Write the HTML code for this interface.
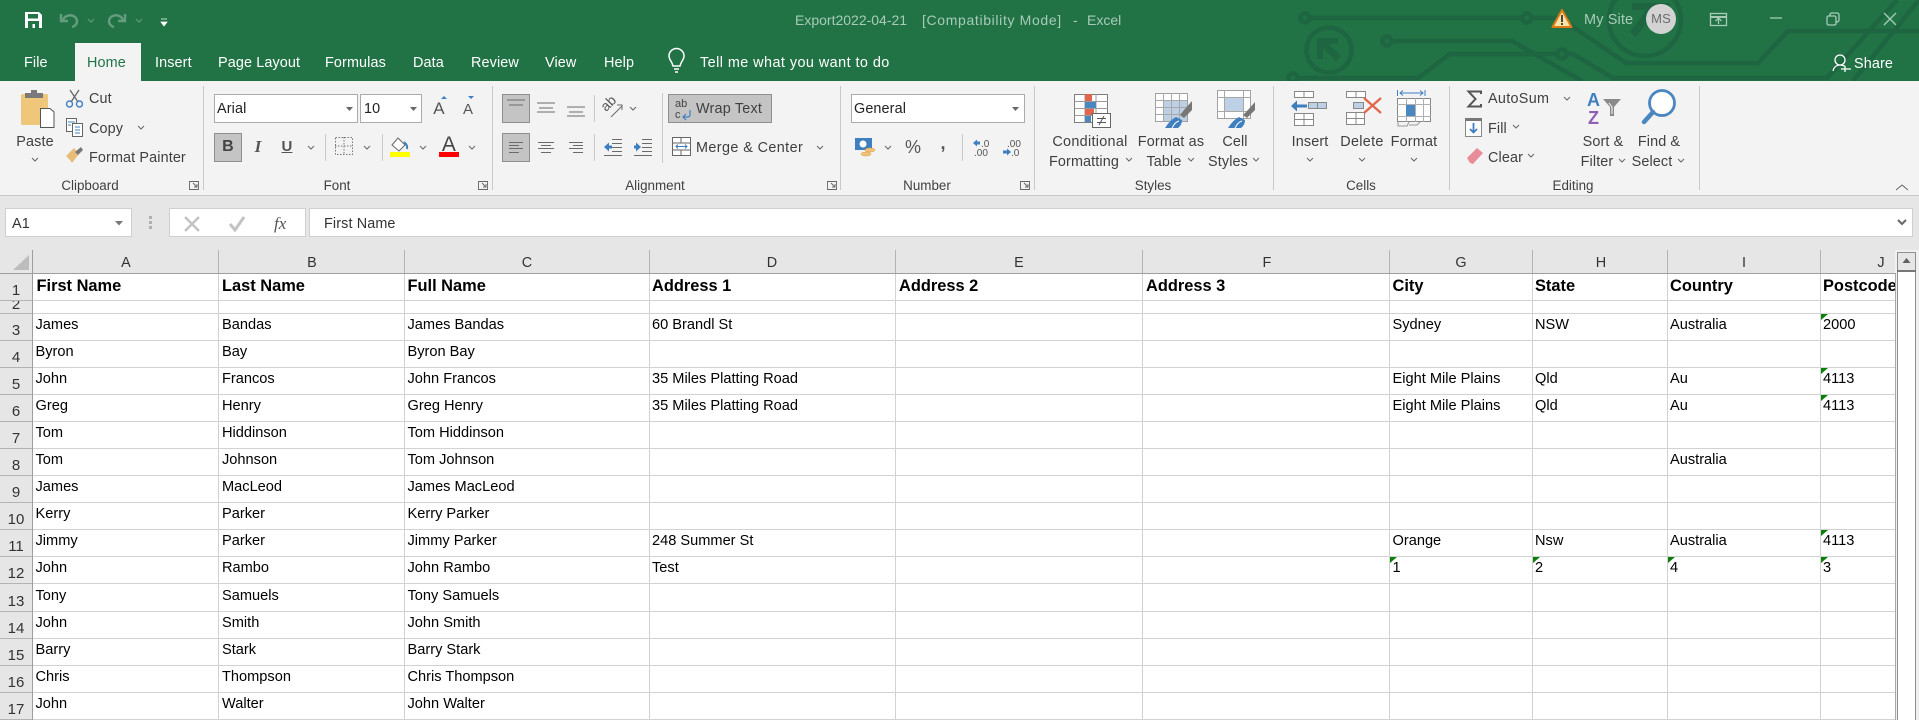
<!DOCTYPE html>
<html><head><meta charset="utf-8"><title>Export2022-04-21 - Excel</title>
<style>
html,body{margin:0;padding:0;background:#fff}
#p{position:relative;width:1919px;height:720px;overflow:hidden;background:#fff;font-family:"Liberation Sans",Arial,sans-serif}
#p>svg{position:absolute;left:0;top:0}
.t,.c{position:absolute;white-space:nowrap;font-size:14.4px;color:#404040;transform:translateY(calc(-50% + 1px));line-height:18px;letter-spacing:.12px}
.c{transform:translate(-50%,calc(-50% + 1px))}
.w{color:#fff}.d{color:#a8cbb8;transform:translateY(-50%)}
.c.l{font-size:13.4px;transform:translate(-50%,-50%);letter-spacing:0}
.r{position:absolute;left:0;width:1895px;height:27px;overflow:hidden;font-size:14.6px;line-height:22px;color:#000}
.r i{position:absolute;font-style:normal;white-space:nowrap;top:1px}
.a{left:35.5px}.b{left:222px}.e{left:407.5px}.f{left:652px}.g{left:1392.5px}.h{left:1535px}.k{left:1670px}.j{left:1823px}
.h1{font-weight:bold;font-size:16.4px;line-height:24px}
.n{position:absolute;left:0;width:32px;text-align:center;font-size:15px;line-height:18px;color:#333;overflow:hidden}
</style></head><body><div id="p">
<svg width="1919" height="720" viewBox="0 0 1919 720" xmlns="http://www.w3.org/2000/svg">
<rect width="1919" height="81" fill="#217346"/>
<g fill="none" stroke="#1e6541" stroke-width="4.5">
<path d="M1309,18H1523M1531,18H1560L1626,63H1758L1788,31H1919"/>
<circle cx="1305" cy="18" r="4.5"/><circle cx="1527" cy="18" r="4.5"/>
<path d="M1392,41H1512L1582,81"/><circle cx="1387" cy="41" r="4.5"/>
<path d="M1557,54H1450L1418,78H1298"/><circle cx="1562" cy="54" r="4.5"/><circle cx="1293" cy="78" r="4.5"/>
<path d="M1567,54H1573L1613,78H1827L1897,0M1853,81L1919,0"/>
<circle cx="1329" cy="50" r="22.5"/><circle cx="1645" cy="20" r="36"/>
</g>
<path d="M1317,38H1338V44H1329L1341,56L1336,61L1323,48V59H1317Z" fill="#1e6541"/>
<path d="M1632,3H1670V10H1660V25H1652V16L1636,37L1630,32L1646,10H1632Z" fill="#1e6541"/>
<rect y="43" x="75" width="66" height="38" fill="#f3f3f3"/>
<rect y="81" width="1919" height="114" fill="#f3f3f3"/>
<rect y="195" width="1919" height="1" fill="#c9c9c9"/>
<rect y="196" width="1919" height="77" fill="#e6e6e6"/>

<!-- QAT -->
<path d="M25,12H39L42,15V28H25Z" fill="#fff"/><rect x="28" y="14" width="10" height="4.5" fill="#217346"/><rect x="28" y="21" width="11" height="7" fill="#217346"/><rect x="32.5" y="24" width="2.5" height="4" fill="#fff"/>
<g fill="none" stroke="#649c7e" stroke-width="2.4"><path d="M63,21A7,6,0,1,1,72,27M61,14V21H68"/><path d="M123,21A7,6,0,1,0,114,27M125,14V21H118"/></g>
<g fill="none" stroke="#649c7e" stroke-width="1"><path d="M88,19l3,3,3-3M136,19l3,3,3-3"/></g>
<path d="M161,19H167M161,22H167L164,26Z" fill="#fff" stroke="#fff" stroke-width=".8"/>
<!-- bulb -->
<g fill="none" stroke="#fff" stroke-width="1.5"><path d="M673,66C672,61,669,60,669,56A7.5,7.5,0,0,1,684,56C684,60,681,61,680,66Z"/><path d="M674,69H679M675,72H678"/></g>
<!-- warning -->
<path d="M1562,10L1571.5,27H1552.5Z" fill="#fce3a6" stroke="#e07a14" stroke-width="2" stroke-linejoin="round"/><rect x="1561" y="15" width="2" height="7" fill="#444"/><rect x="1561" y="23" width="2" height="2" fill="#444"/>
<circle cx="1661" cy="19" r="15" fill="#d3d3d3"/>
<!-- window controls -->
<g fill="none" stroke="#a8cbb8" stroke-width="1.3">
<rect x="1710.5" y="13.5" width="16" height="12"/><path d="M1711,17H1726" stroke-width="2"/><path d="M1718.5,24V18M1715.5,21l3-3,3,3"/>
<path d="M1770,18H1782"/>
<rect x="1827" y="16" width="9" height="9" rx="1.5"/><path d="M1830,16V14.500Q1830,13,1832,13H1837Q1839,13,1839,15V20Q1839,22,1836,22"/>
<path d="M1884,13L1896,25M1896,13L1884,25"/>
</g>
<g fill="none" stroke="#fff" stroke-width="1.3"><circle cx="1840" cy="60" r="5"/><path d="M1833,71C1834,66,1838,65,1840,65C1842,65,1844,66,1845,66M1845,66V72M1841,69H1851"/></g>

<!-- separators -->
<g fill="#c9c9c9"><rect x="203" y="86" width="1" height="104"/><rect x="492" y="86" width="1" height="104"/><rect x="840" y="86" width="1" height="104"/><rect x="1034" y="86" width="1" height="104"/><rect x="1273" y="86" width="1" height="104"/><rect x="1449" y="86" width="1" height="104"/><rect x="1699" y="86" width="1" height="104"/>
<rect x="325" y="134" width="1" height="27"/><rect x="382" y="134" width="1" height="27"/><rect x="594" y="95" width="1" height="27"/><rect x="594" y="134" width="1" height="27"/><rect x="662" y="93" width="1" height="70"/><rect x="962" y="134" width="1" height="27"/></g>

<!-- clipboard -->
<rect x="21" y="94" width="27" height="31" rx="1.5" fill="#eec77b"/>
<path d="M25,98V93H31V90H37V93H43V98Z" fill="#7a7a7a"/>
<path d="M40.500,108.500H50L54,112V127.500H40.500Z" fill="#fff" stroke="#555"/>
<g fill="none" stroke="#666" stroke-width="1.3"><path d="M70,90L78,102M79,90L71,102"/></g>
<g fill="none" stroke="#3f7fc0" stroke-width="1.4"><circle cx="69.500" cy="104" r="3"/><circle cx="79.500" cy="104" r="3"/></g>
<g fill="#fff" stroke="#666"><rect x="66.500" y="118.500" width="10" height="13"/><rect x="72.500" y="123.500" width="10" height="13"/></g>
<path d="M68,122H75M68,125H71M75,127H80M75,130H80M75,133H80" stroke="#3f7fc0" fill="none"/>
<path d="M66,156L74,148L79,154L72,163C70,160,68,158,66,156Z" fill="#e8bd7a"/><path d="M75,152L81,147L83,150L78,155Z" fill="#777"/>

<!-- font boxes -->
<g fill="#fff" stroke="#ababab"><rect x="214.500" y="94.500" width="143" height="28"/><rect x="360.500" y="94.500" width="61" height="28"/><rect x="851.500" y="94.500" width="173" height="28"/></g>
<g fill="#666"><path d="M346,107h7l-3.500,4zM410,107h7l-3.500,4zM1012,107h7l-3.500,4z"/></g>
<g fill="#c4c4c4" stroke="#8f8f8f"><rect x="214.500" y="133.500" width="27" height="28"/><rect x="502.500" y="94.500" width="27" height="28"/><rect x="502.500" y="133.500" width="27" height="28"/><rect x="668.500" y="94.500" width="103" height="28"/></g>
<!-- A up/down -->
<path d="M444,96l3,3h-6zM471,99l3-3h-6z" fill="#3f7fc0"/>
<!-- borders -->
<rect x="335.500" y="137.500" width="17" height="17" fill="none" stroke="#777" stroke-dasharray="1.500 1.500"/><path d="M344,137V155M335,146H353" stroke="#777" stroke-dasharray="1.500 1.500"/>
<!-- fill color -->
<path d="M392,145L398,138L405,145L399,151Z" fill="#fff" stroke="#666"/><path d="M404,142Q408,145,407,149" stroke="#3f7fc0" stroke-width="2" fill="none"/>
<rect x="390" y="152" width="20" height="5" fill="#ff0"/>
<rect x="439" y="152" width="20" height="5" fill="#f00"/>
<!-- align -->
<g stroke="#6b6b6b" stroke-width="1" fill="none">
<path d="M507,100H525M509,105H523"/>
<path d="M537,103H555M539,108H553M537,112H555"/>
<path d="M567,107H585M569,112H583M567,116H585"/>
<path d="M509,142.500H523M509,145.500H519M509,148.500H523M509,152.500H519"/>
<path d="M538,142.500H554M541,145.500H551M538,148.500H554M541,152.500H551"/>
<path d="M569,142.500H583M573,145.500H583M569,148.500H583M573,152.500H583"/>
<path d="M612,139.500H622M612,143.500H622M612,147.500H622M612,151.500H622M604,155.500H622"/>
<path d="M642,139.500H652M642,143.500H652M642,147.500H652M642,151.500H652M634,155.500H652"/>
<path d="M611,117L622,106M617,105H622V110"/>
</g>
<path d="M604,147l5-4.500v3h3v3h-3v3zM641,147l-5-4.500v3h-2v3h2v3z" fill="#3f7fc0"/>
<text x="602" y="108" font-size="14" fill="#555" transform="rotate(-45 609 105)" font-family="Liberation Sans">ab</text>
<!-- wrap -->
<text x="675" y="107" font-size="11" fill="#444" font-family="Liberation Sans">ab</text><text x="675" y="118" font-size="11" fill="#444" font-family="Liberation Sans">c</text>
<path d="M690,110V115Q690,117,687,117H683M686,114l-3,3,3,3" fill="none" stroke="#3f7fc0" stroke-width="1.200"/>
<!-- merge -->
<rect x="672.500" y="137.500" width="18" height="18" fill="#fff" stroke="#666"/><path d="M672,143H691M672,150H691M681,137V143M681,150V156" stroke="#666"/><path d="M676,146.500H687M678,144.500l-2,2,2,2M685,144.500l2,2-2,2" fill="none" stroke="#3f7fc0"/>
<!-- currency -->
<rect x="855" y="138" width="17" height="12" fill="#3f7fc0"/><circle cx="863" cy="144" r="3.500" fill="#fff"/><ellipse cx="870" cy="150" rx="5" ry="2" fill="#f2c27a" stroke="#d99a3f" stroke-width=".5"/><ellipse cx="866" cy="154" rx="5" ry="2" fill="#f2c27a" stroke="#d99a3f" stroke-width=".5"/>
<!-- decimals -->
<g font-family="Liberation Sans" font-size="10" fill="#555"><text x="981" y="147">.0</text><text x="974" y="156">.00</text><text x="1007" y="147">.00</text><text x="1011" y="156">.0</text></g>
<path d="M973,143l4-3.500v2h3v3h-3v2zM1011,152l-4-3.500v2h-4v3h4v2z" fill="#3f7fc0"/>
<!-- conditional -->
<g fill="#fff" stroke="#7d7d7d"><rect x="1074.500" y="94.500" width="33" height="28"/></g>
<path d="M1074,101.500H1108M1074,108.500H1108M1074,115.500H1108M1085,94V122M1096,94V122" stroke="#9a9a9a"/>
<rect x="1085" y="94" width="7" height="7" fill="#e0654a"/><rect x="1085" y="102" width="11" height="6" fill="#4a86c0"/><rect x="1085" y="109" width="9" height="6" fill="#e0654a"/><rect x="1085" y="116" width="6" height="6" fill="#4a86c0"/>
<rect x="1092.500" y="113.500" width="18" height="14" fill="#fff" stroke="#666"/><path d="M1097,118.500H1106M1097,122.500H1106M1104,116L1099,125" stroke="#555" fill="none"/>
<!-- format as table -->
<rect x="1155.500" y="93.500" width="32" height="28" fill="#fff" stroke="#a0a0a0"/><rect x="1163" y="101" width="24" height="20" fill="#bdd0e6"/><path d="M1155,100.500H1187M1155,107.500H1187M1155,114.500H1187M1163.500,93V121M1171.500,93V121M1179.500,93V121" stroke="#a8a8a8"/>
<path d="M1192,101L1184,110L1180,115L1184,118L1192,110Z" fill="#777"/><path d="M1165,128Q1170,120,1176,117L1182,120Q1182,125,1178,128Z" fill="#3f7fc0"/><path d="M1172,128Q1175,122,1179,121" stroke="#fff" fill="none"/>
<!-- cell styles -->
<rect x="1217.500" y="90.500" width="33" height="28" fill="#fff" stroke="#a0a0a0"/><rect x="1224" y="98" width="19" height="13" fill="#bdd0e6"/><path d="M1217,97.500H1250M1217,111.500H1250M1224.500,90V118M1243.500,90V118" stroke="#a8a8a8"/>
<path d="M1255,102L1247,111L1243,115L1247,118L1255,110Z" fill="#777"/><path d="M1228,128Q1233,120,1239,117L1245,120Q1245,125,1241,128Z" fill="#3f7fc0"/><path d="M1235,128Q1238,122,1242,121" stroke="#fff" fill="none"/>
<!-- insert -->
<g fill="#fff" stroke="#888"><rect x="1294.500" y="91.500" width="19" height="6"/><rect x="1294.500" y="113.500" width="19" height="12"/><rect x="1346.500" y="91.500" width="19" height="6"/><rect x="1346.500" y="112.500" width="18" height="12"/><rect x="1397.500" y="98.500" width="33" height="23"/></g>
<path d="M1304,91V97M1304,113V126M1294,119.500H1313M1356,91V97M1356,112V124M1346,118.500H1364" stroke="#888"/>
<g fill="#bdd0e6" stroke="#888"><rect x="1308.500" y="102.500" width="18" height="6"/><rect x="1353.500" y="102.500" width="10" height="6"/></g>
<path d="M1317.500,102V109" stroke="#888"/>
<path d="M1291,106l6-5.500v4h10v3h-10v4z" fill="#3f7fc0"/>
<path d="M1364,98L1381,113M1381,98L1364,113" stroke="#e0654a" stroke-width="2.200"/>
<!-- format -->
<path d="M1397.500,90V96M1425,90V96M1400,93H1423M1403,90.500l-3,2.500,3,2.500M1420,90.500l3,2.500-3,2.500" fill="none" stroke="#3f7fc0"/>
<path d="M1397,104.500H1431M1397,116.500H1431M1406.500,98V122M1415.500,98V122M1423.500,98V122" stroke="#b0b0b0"/>
<rect x="1406" y="105" width="9" height="11" fill="#4a86c0"/>
<path d="M1398,122V126H1407L1409,122M1409,125H1417L1420,122" fill="none" stroke="#999"/>
<!-- editing -->
<path d="M1481,94V91.500H1468.500L1475.500,99L1468.500,106.500H1481V104" fill="none" stroke="#555" stroke-width="2"/>
<rect x="1465.500" y="118.500" width="16" height="18" fill="#fff" stroke="#888"/><rect x="1465" y="118" width="17" height="3" fill="#777"/><path d="M1473.500,123V132M1470,129l3.500,3.500,3.500-3.500" fill="none" stroke="#3f7fc0" stroke-width="1.800"/>
<path d="M1467,158L1477,148L1483,153L1473,164L1470,163Z" fill="#e98c9a"/>
<text x="1587" y="106" font-size="18" font-weight="bold" fill="#3f7fc0" font-family="Liberation Sans">A</text>
<text x="1588" y="124" font-size="18" font-weight="bold" fill="#8e5fb5" font-family="Liberation Sans">Z</text>
<path d="M1603,99H1621L1614,107V116H1610V107Z" fill="#8a8a8a"/><path d="M1609,103L1612,107V114" stroke="#fff" fill="none"/>
<circle cx="1662" cy="103" r="12.500" fill="#fff" stroke="#4a86c0" stroke-width="2.800"/><path d="M1653,112L1644,122" stroke="#4a86c0" stroke-width="4.500" stroke-linecap="round"/>
<!-- chevrons -->
<g fill="none" stroke="#666" stroke-width="1">
<path d="M32,158l3,3,3-3M138,126l3,3,3-3M308,146l3,3,3-3M364,146l3,3,3-3M420,146l3,3,3-3M469,146l3,3,3-3M630,107l3,3,3-3M817,146l3,3,3-3M885,146l3,3,3-3M1126,158l3,3,3-3M1188,158l3,3,3-3M1253,158l3,3,3-3M1307,158l3,3,3-3M1359,158l3,3,3-3M1411,158l3,3,3-3M1564,97l3,3,3-3M1513,125l3,3,3-3M1528,154l3,3,3-3M1619,159l3,3,3-3M1678,159l3,3,3-3"/>
<path d="M1896,190l6-5,6,5"/>
<path d="M189.500,181.500h9v8h-9zM193,183l4,4M197,184v3h-3" stroke-width=".9"/>
<path d="M478.500,181.500h9v8h-9zM482,183l4,4M486,184v3h-3" stroke-width=".9"/>
<path d="M827.500,181.500h9v8h-9zM831,183l4,4M835,184v3h-3" stroke-width=".9"/>
<path d="M1020.500,181.500h9v8h-9zM1024,183l4,4M1028,184v3h-3" stroke-width=".9"/>
</g>

<!-- formula bar -->
<g fill="#fff" stroke="#cfcfcf"><rect x="5.500" y="208.500" width="126" height="28"/><rect x="169.500" y="208.500" width="136" height="28"/><rect x="309.500" y="208.500" width="1603" height="28"/></g>
<path d="M115,221h8l-4,4.500z" fill="#777"/>
<g fill="#b0b0b0"><rect x="149" y="216" width="3" height="3"/><rect x="149" y="221" width="3" height="3"/><rect x="149" y="226" width="3" height="3"/></g>
<path d="M185,217L199,231M199,217L185,231" stroke="#c3c3c3" stroke-width="2.500"/><path d="M230,224L235,230L244,217" stroke="#c3c3c3" stroke-width="3" fill="none"/>
<path d="M1898,220l4,4,4-4" fill="none" stroke="#666" stroke-width="2"/>
<text x="274" y="229" font-family="Liberation Serif" font-style="italic" font-size="17" fill="#555">fx</text>

<!-- header/grid -->
<rect y="250" width="1897" height="23" fill="#e6e6e6"/>
<rect y="273" width="32" height="447" fill="#e6e6e6"/>
<path d="M13,270H29V255Z" fill="#bdbdbd"/>
<rect x="32" y="250" width="1" height="470" fill="#9e9e9e"/>
<rect y="273" width="1895" height="1" fill="#9e9e9e"/>
<g fill="#b4b4b4"><rect x="218" y="250" width="1" height="23"/><rect x="404" y="250" width="1" height="23"/><rect x="649" y="250" width="1" height="23"/><rect x="895" y="250" width="1" height="23"/><rect x="1142" y="250" width="1" height="23"/><rect x="1389" y="250" width="1" height="23"/><rect x="1532" y="250" width="1" height="23"/><rect x="1667" y="250" width="1" height="23"/><rect x="1820" y="250" width="1" height="23"/></g>
<g fill="#d2d2d2"><rect x="218" y="274" width="1" height="446"/><rect x="404" y="274" width="1" height="446"/><rect x="649" y="274" width="1" height="446"/><rect x="895" y="274" width="1" height="446"/><rect x="1142" y="274" width="1" height="446"/><rect x="1389" y="274" width="1" height="446"/><rect x="1532" y="274" width="1" height="446"/><rect x="1667" y="274" width="1" height="446"/><rect x="1820" y="274" width="1" height="446"/>
<rect x="33" y="300" width="1862" height="1"/><rect x="33" y="313" width="1862" height="1"/><rect x="33" y="340" width="1862" height="1"/><rect x="33" y="367" width="1862" height="1"/><rect x="33" y="394" width="1862" height="1"/><rect x="33" y="421" width="1862" height="1"/><rect x="33" y="448" width="1862" height="1"/><rect x="33" y="475" width="1862" height="1"/><rect x="33" y="502" width="1862" height="1"/><rect x="33" y="529" width="1862" height="1"/><rect x="33" y="556" width="1862" height="1"/><rect x="33" y="583" width="1862" height="1"/><rect x="33" y="611" width="1862" height="1"/><rect x="33" y="638" width="1862" height="1"/><rect x="33" y="665" width="1862" height="1"/><rect x="33" y="692" width="1862" height="1"/><rect x="33" y="719" width="1862" height="1"/></g>
<g fill="#b4b4b4"><rect y="300" width="32" height="1"/><rect y="313" width="32" height="1"/><rect y="340" width="32" height="1"/><rect y="367" width="32" height="1"/><rect y="394" width="32" height="1"/><rect y="421" width="32" height="1"/><rect y="448" width="32" height="1"/><rect y="475" width="32" height="1"/><rect y="502" width="32" height="1"/><rect y="529" width="32" height="1"/><rect y="556" width="32" height="1"/><rect y="583" width="32" height="1"/><rect y="611" width="32" height="1"/><rect y="638" width="32" height="1"/><rect y="665" width="32" height="1"/><rect y="692" width="32" height="1"/><rect y="719" width="32" height="1"/></g>
<!-- scrollbar -->
<rect x="1895" y="250" width="24" height="470" fill="#f0f0f0"/>
<rect x="1895" y="273" width="1" height="447" fill="#a8a8a8"/>
<rect x="1897.500" y="252.500" width="18" height="468" fill="#fff" stroke="#8f8f8f"/>
<rect x="1898" y="253" width="17" height="17" fill="#e6e6e6"/>
<rect x="1897" y="270" width="19" height="2" fill="#777"/>
<path d="M1902.500,263h8l-4-5z" fill="#606060"/>
</svg>

<!-- titlebar text -->
<div class="t d" style="left:795px;top:20px;font-size:14px;letter-spacing:0">Export2022-04-21</div>
<div class="t d" style="left:922px;top:20px;font-size:14px;letter-spacing:.65px">[Compatibility Mode]</div>
<div class="t d" style="left:1073px;top:20px;font-size:14px;letter-spacing:0">-</div>
<div class="t d" style="left:1087px;top:20px;font-size:14px;letter-spacing:0">Excel</div>
<div class="t d" style="left:1584px;top:20px;font-size:14.500px">My Site</div>
<div class="c" style="left:1661px;top:18px;font-size:13px;color:#6b6b6b">MS</div>
<div class="t w" style="left:24px;top:62px">File</div>
<div class="t" style="left:87px;top:62px;color:#217346">Home</div>
<div class="t w" style="left:155px;top:62px">Insert</div>
<div class="t w" style="left:218px;top:62px">Page Layout</div>
<div class="t w" style="left:325px;top:62px">Formulas</div>
<div class="t w" style="left:413px;top:62px">Data</div>
<div class="t w" style="left:471px;top:62px">Review</div>
<div class="t w" style="left:545px;top:62px">View</div>
<div class="t w" style="left:604px;top:62px">Help</div>
<div class="t w" style="left:700px;top:62px;letter-spacing:.45px">Tell me what you want to do</div>
<div class="t w" style="left:1854px;top:63px">Share</div>

<!-- clipboard text -->
<div class="c" style="left:35px;top:141px">Paste</div>
<div class="t" style="left:89px;top:98px">Cut</div>
<div class="t" style="left:89px;top:128px">Copy</div>
<div class="t" style="left:89px;top:157px">Format Painter</div>
<div class="c l" style="left:90px;top:186px">Clipboard</div>
<div class="t" style="left:217px;top:108px;color:#222">Arial</div>
<div class="t" style="left:364px;top:108px;color:#222">10</div>
<div class="c" style="left:439px;top:108px;font-size:17px;color:#555">A</div>
<div class="c" style="left:468px;top:109px;font-size:15px;color:#555">A</div>
<div class="c" style="left:228px;top:146px;font-weight:bold;font-size:16px;color:#444">B</div>
<div class="c" style="left:258px;top:146px;font-family:'Liberation Serif',serif;font-style:italic;font-weight:bold;font-size:17px;color:#555">I</div>
<div class="c" style="left:287px;top:146px;font-weight:bold;font-size:15px;text-decoration:underline;color:#555">U</div>
<div class="c" style="left:449px;top:144px;font-size:21px;color:#444">A</div>
<div class="c l" style="left:337px;top:186px">Font</div>
<div class="t" style="left:696px;top:108px;letter-spacing:.2px">Wrap Text</div>
<div class="t" style="left:696px;top:147px;letter-spacing:.4px">Merge &amp; Center</div>
<div class="c l" style="left:655px;top:186px">Alignment</div>
<div class="t" style="left:854px;top:108px;color:#222">General</div>
<div class="c" style="left:913px;top:146px;font-size:18px;color:#555">%</div>
<div class="c" style="left:943px;top:142px;font-size:18px;font-weight:bold;color:#555">,</div>
<div class="c l" style="left:927px;top:186px">Number</div>
<div class="c" style="left:1090px;top:141px;letter-spacing:.3px">Conditional</div>
<div class="c" style="left:1084px;top:161px;letter-spacing:.12px">Formatting</div>
<div class="c" style="left:1171px;top:141px;letter-spacing:.2px">Format as</div>
<div class="c" style="left:1164px;top:161px">Table</div>
<div class="c" style="left:1235px;top:141px">Cell</div>
<div class="c" style="left:1228px;top:161px">Styles</div>
<div class="c l" style="left:1153px;top:186px">Styles</div>
<div class="c" style="left:1310px;top:141px">Insert</div>
<div class="c" style="left:1362px;top:141px;letter-spacing:.3px">Delete</div>
<div class="c" style="left:1414px;top:141px;letter-spacing:.2px">Format</div>
<div class="c l" style="left:1361px;top:186px">Cells</div>
<div class="t" style="left:1488px;top:98px;letter-spacing:.3px">AutoSum</div>
<div class="t" style="left:1488px;top:128px">Fill</div>
<div class="t" style="left:1488px;top:157px">Clear</div>
<div class="c" style="left:1603px;top:141px">Sort &amp;</div>
<div class="c" style="left:1597px;top:161px">Filter</div>
<div class="c" style="left:1659px;top:141px">Find &amp;</div>
<div class="c" style="left:1652px;top:161px">Select</div>
<div class="c l" style="left:1573px;top:186px">Editing</div>
<div class="t" style="left:12px;top:223px;color:#333">A1</div>
<div class="t" style="left:324px;top:223px;color:#333">First Name</div>

<!-- col headers -->
<div class="c" style="left:126px;top:262px;color:#333">A</div>
<div class="c" style="left:312px;top:262px;color:#333">B</div>
<div class="c" style="left:527px;top:262px;color:#333">C</div>
<div class="c" style="left:772px;top:262px;color:#333">D</div>
<div class="c" style="left:1019px;top:262px;color:#333">E</div>
<div class="c" style="left:1267px;top:262px;color:#333">F</div>
<div class="c" style="left:1461px;top:262px;color:#333">G</div>
<div class="c" style="left:1601px;top:262px;color:#333">H</div>
<div class="c" style="left:1744px;top:262px;color:#333">I</div>
<div class="c" style="left:1881px;top:262px;color:#333">J</div>

<!-- row numbers -->
<div class="n" style="top:282px;height:18px">1</div>
<div class="n" style="top:301px;height:12px;line-height:8px;padding:0">2</div>
<div class="n" style="top:322px">3</div><div class="n" style="top:349px">4</div><div class="n" style="top:376px">5</div><div class="n" style="top:403px">6</div><div class="n" style="top:430px">7</div><div class="n" style="top:457px">8</div><div class="n" style="top:484px">9</div><div class="n" style="top:511px">10</div><div class="n" style="top:538px">11</div><div class="n" style="top:565px">12</div><div class="n" style="top:593px">13</div><div class="n" style="top:620px">14</div><div class="n" style="top:647px">15</div><div class="n" style="top:674px">16</div><div class="n" style="top:701px">17</div>

<!-- cells -->
<div class="r h1" style="top:273px"><i class="a" style="left:36.5px">First Name</i><i class="b">Last Name</i><i class="e">Full Name</i><i class="f">Address 1</i><i style="left:899px">Address 2</i><i style="left:1146px">Address 3</i><i class="g">City</i><i class="h">State</i><i class="k">Country</i><i class="j">Postcode</i></div>
<div class="r" style="top:313px"><i class="a">James</i><i class="b">Bandas</i><i class="e">James Bandas</i><i class="f">60 Brandl St</i><i class="g">Sydney</i><i class="h">NSW</i><i class="k">Australia</i><i class="j">2000</i></div>
<div class="r" style="top:340px"><i class="a">Byron</i><i class="b">Bay</i><i class="e">Byron Bay</i></div>
<div class="r" style="top:367px"><i class="a">John</i><i class="b">Francos</i><i class="e">John Francos</i><i class="f">35 Miles Platting Road</i><i class="g">Eight Mile Plains</i><i class="h">Qld</i><i class="k">Au</i><i class="j">4113</i></div>
<div class="r" style="top:394px"><i class="a">Greg</i><i class="b">Henry</i><i class="e">Greg Henry</i><i class="f">35 Miles Platting Road</i><i class="g">Eight Mile Plains</i><i class="h">Qld</i><i class="k">Au</i><i class="j">4113</i></div>
<div class="r" style="top:421px"><i class="a">Tom</i><i class="b">Hiddinson</i><i class="e">Tom Hiddinson</i></div>
<div class="r" style="top:448px"><i class="a">Tom</i><i class="b">Johnson</i><i class="e">Tom Johnson</i><i class="k">Australia</i></div>
<div class="r" style="top:475px"><i class="a">James</i><i class="b">MacLeod</i><i class="e">James MacLeod</i></div>
<div class="r" style="top:502px"><i class="a">Kerry</i><i class="b">Parker</i><i class="e">Kerry Parker</i></div>
<div class="r" style="top:529px"><i class="a">Jimmy</i><i class="b">Parker</i><i class="e">Jimmy Parker</i><i class="f">248 Summer St</i><i class="g">Orange</i><i class="h">Nsw</i><i class="k">Australia</i><i class="j">4113</i></div>
<div class="r" style="top:556px"><i class="a">John</i><i class="b">Rambo</i><i class="e">John Rambo</i><i class="f">Test</i><i class="g">1</i><i class="h">2</i><i class="k">4</i><i class="j">3</i></div>
<div class="r" style="top:584px"><i class="a">Tony</i><i class="b">Samuels</i><i class="e">Tony Samuels</i></div>
<div class="r" style="top:611px"><i class="a">John</i><i class="b">Smith</i><i class="e">John Smith</i></div>
<div class="r" style="top:638px"><i class="a">Barry</i><i class="b">Stark</i><i class="e">Barry Stark</i></div>
<div class="r" style="top:665px"><i class="a">Chris</i><i class="b">Thompson</i><i class="e">Chris Thompson</i></div>
<div class="r" style="top:692px"><i class="a">John</i><i class="b">Walter</i><i class="e">John Walter</i></div>

<svg width="1919" height="720" viewBox="0 0 1919 720" style="pointer-events:none">
<path fill="#0a7d0a" d="M1821,314h7l-7,6zM1821,368h7l-7,6zM1821,395h7l-7,6zM1821,530h7l-7,6zM1821,557h7l-7,6zM1390,557h7l-7,6zM1533,557h7l-7,6zM1668,557h7l-7,6z"/>
</svg>
</div></body></html>
